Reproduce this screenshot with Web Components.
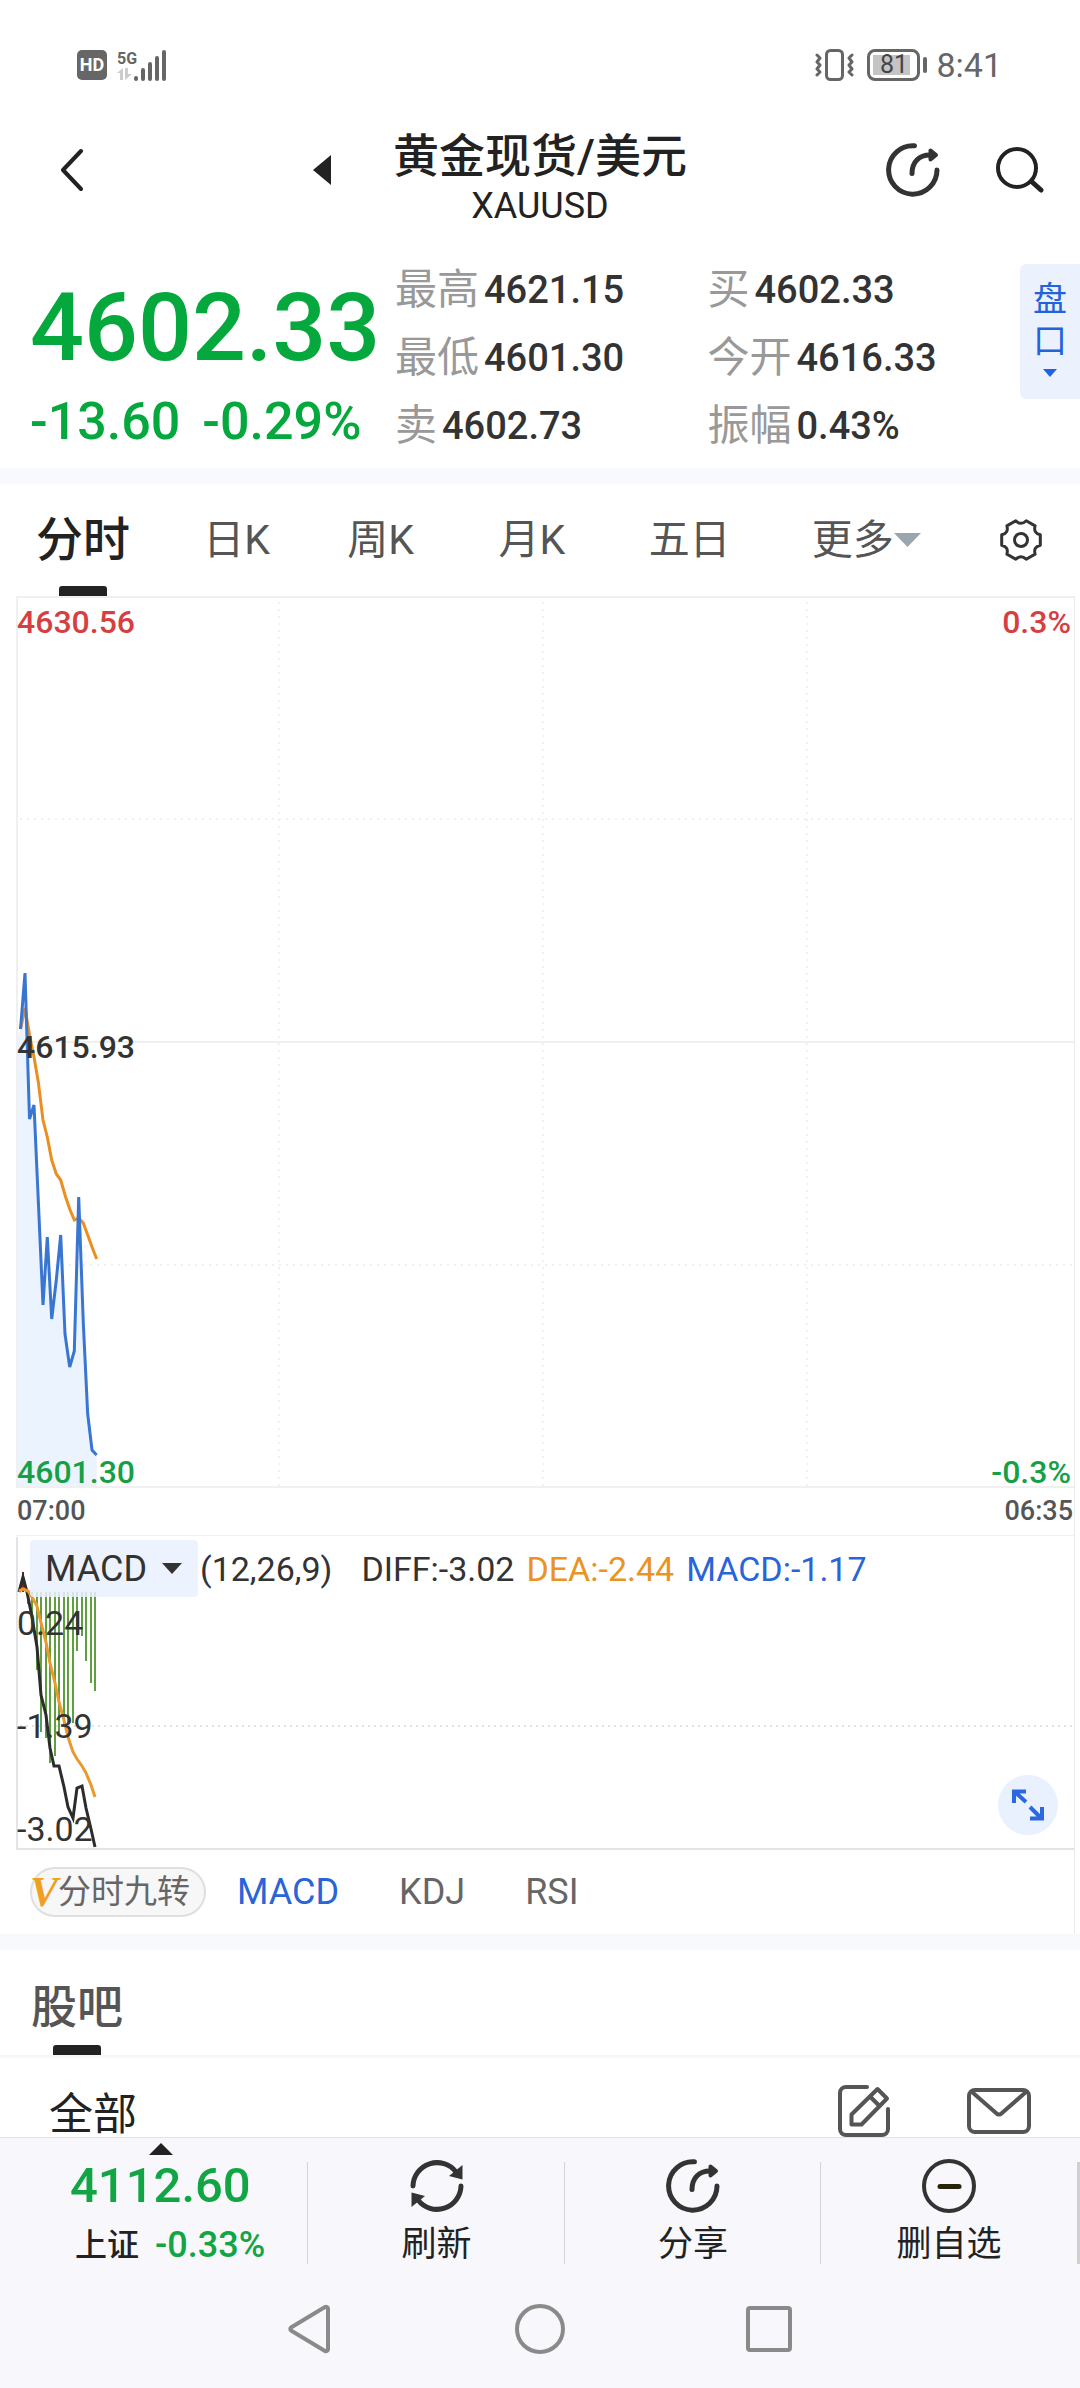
<!DOCTYPE html>
<html lang="zh-CN">
<head>
<meta charset="utf-8">
<meta name="viewport" content="width=device-width, initial-scale=1">
<title>黄金现货/美元 XAUUSD</title>
<style>
  body {
    margin: 0;
    min-height: 100vh;
    display: flex;
    flex-direction: column;
    background: #fff;
    color: #222;
    font-family: Roboto, "Noto Sans CJK SC", sans-serif;
  }
</style>
</head>
<body>
<status-bar></status-bar>
<page-header>黄金现货/美元<span slot="code">XAUUSD</span></page-header>
<quote-panel>
  <span slot="price">4602.33</span>
  <span slot="change">-13.60</span>
  <span slot="percent">-0.29%</span>
  <quote-stat label="最高">4621.15</quote-stat>
  <quote-stat label="买">4602.33</quote-stat>
  <quote-stat label="最低">4601.30</quote-stat>
  <quote-stat label="今开">4616.33</quote-stat>
  <quote-stat label="卖">4602.73</quote-stat>
  <quote-stat label="振幅">0.43%</quote-stat>
</quote-panel>
<section-band></section-band>
<period-tabs></period-tabs>
<chart-board>
  <price-chart></price-chart>
  <macd-chart></macd-chart>
  <indicator-row></indicator-row>
</chart-board>
<section-band></section-band>
<forum-section></forum-section>
<bottom-bar></bottom-bar>
<system-nav></system-nav>

<script>
// 共用基底：每個元件自帶 Shadow DOM 與樣式
class BaseElement extends HTMLElement {
  constructor() {
    super();
    this.attachShadow({ mode: 'open' });
  }

  connectedCallback() {
    this.shadowRoot.innerHTML = `
      <style>
        * { margin: 0; padding: 0; box-sizing: border-box; }
        :host { display: block; box-sizing: border-box; }
        button, select {
          border: none;
          background: none;
          color: inherit;
          font: inherit;
          cursor: pointer;
        }
        a { color: inherit; text-decoration: none; }
        svg { display: block; flex-shrink: 0; }
        ${this.styles}
      </style>
      ${this.markup}
    `;
  }

  get styles() { return ''; }
  get markup() { return ''; }
}

// 分享與工具列共用的圖示
const shareIcon = `
  <svg width="54" height="54" viewBox="0 0 54 54" fill="none" stroke="#333" stroke-width="5" stroke-linecap="round" aria-hidden="true">
    <path d="M28.500 2.800A24.200 24.200 0 1 0 51 27"/>
    <path d="M26 30.500C26 19 33 12 44 12"/>
    <path d="M44.500 7.500v9l5.500-4.500z" fill="#333" stroke-width="4" stroke-linejoin="round"/>
  </svg>`;

class StatusBar extends BaseElement {
  get styles() {
    return `
      :host {
        display: flex;
        justify-content: space-between;
        align-items: center;
        height: 112px;
        padding: 18px 78px 0 77px;
        color: #666;
      }
      .group { display: flex; align-items: center; }
      .hd {
        width: 30px;
        border-radius: 5px;
        background: #666;
        color: #fff;
        font-size: 18px;
        font-weight: 700;
        line-height: 30px;
        text-align: center;
      }
      .net { width: 17px; margin-left: 10px; font-size: 16px; font-weight: 700; line-height: 18px; }
      .battery {
        width: 53px;
        margin-left: 13px;
        border: 3px solid #666;
        border-radius: 8px;
        background: linear-gradient(#c4c4c4, #c4c4c4) 3px 3px / 37px 20px no-repeat;
        color: #444;
        font-size: 25px;
        line-height: 26px;
        text-align: center;
      }
      .cap { width: 4px; height: 16px; margin-left: 3px; border-radius: 2px; background: #666; }
      .time { margin-left: 9px; font-size: 34px; line-height: 40px; }
    `;
  }

  get markup() {
    return `
      <div class="group">
        <div class="hd">HD</div>
        <div class="net">5G
          <svg width="15" height="12" viewBox="0 0 15 12" fill="#ccc"><path d="M6 12H3V5H0L6 0zM8 0h3v6h4l-7 6z"/></svg>
        </div>
        <svg width="33" height="31" viewBox="0 0 33 31" stroke="#666" stroke-width="4" stroke-linecap="round">
          <path d="M2 28v1M9 20v9M16 14v15M23 8v21M30 2v27"/>
        </svg>
      </div>
      <div class="group">
        <svg width="39" height="32" viewBox="0 0 39 32" fill="none" stroke="#666" stroke-width="3" stroke-linecap="round" stroke-linejoin="round">
          <rect x="11.500" y="1.500" width="16" height="29" rx="4"/>
          <path d="M2 6l3 3-3 4 3 3-3 4 3 3-3 3M37 6l-3 3 3 4-3 3 3 4-3 3 3 3"/>
        </svg>
        <div class="battery">81</div>
        <div class="cap"></div>
        <div class="time">8:41</div>
      </div>
    `;
  }
}

class PageHeader extends BaseElement {
  get styles() {
    return `
      :host {
        display: grid;
        grid-template-columns: 1fr auto 1fr;
        align-items: center;
        color: #222;
      }
      .side { display: flex; align-items: center; justify-content: space-between; padding: 0 62px 0 60px; }
      .actions { display: flex; align-items: center; justify-content: flex-end; gap: 56px; padding-right: 36px; }
      .title { padding-top: 16px; text-align: center; }
      h1 { font-size: 46px; font-weight: 500; line-height: 56px; }
      p { font-size: 36px; line-height: 44px; }
    `;
  }

  get markup() {
    return `
      <div class="side">
        <button aria-label="返回">
          <svg width="23" height="44" viewBox="0 0 23 44" fill="none" stroke="#222" stroke-width="4" stroke-linecap="round" stroke-linejoin="round"><path d="M21 3L3 22l18 19"/></svg>
        </button>
        <button aria-label="上一个">
          <svg width="18" height="30" viewBox="0 0 18 30" fill="#222"><path d="M18 0v30L0 15z"/></svg>
        </button>
      </div>
      <div class="title">
        <h1><slot></slot></h1>
        <p><slot name="code"></slot></p>
      </div>
      <div class="actions">
        <button aria-label="分享">${shareIcon}</button>
        <button aria-label="搜索">
          <svg width="48" height="46" viewBox="0 0 48 46" fill="none" stroke="#222" stroke-width="4" stroke-linecap="round"><circle cx="21" cy="21" r="19"/><path stroke-width="5" d="M35.500 34.500l9.500 8.500"/></svg>
        </button>
      </div>
    `;
  }
}

class QuoteStat extends BaseElement {
  get styles() {
    return `
      :host { display: flex; gap: 5px; line-height: 68px; white-space: nowrap; }
      .label { color: #999; font-size: 42px; }
      .value { color: #333; font-size: 38px; font-weight: 500; }
    `;
  }

  get markup() {
    return `
      <span class="label">${this.getAttribute('label')}</span>
      <span class="value"><slot></slot></span>
    `;
  }
}

class QuotePanel extends BaseElement {
  get styles() {
    return `
      :host {
        display: grid;
        grid-template-columns: 365fr 625fr 60px;
        align-items: start;
        padding: 28px 0 8px 30px;
      }
      .main { padding-top: 24px; color: #05a83c; font-weight: 500; white-space: nowrap; }
      .price { font-size: 95px; line-height: 96px; }
      .change { display: flex; gap: 22px; margin-top: 16px; font-size: 52px; line-height: 60px; }
      .stats { display: grid; grid-template-columns: 1fr 1fr; }
      .book {
        display: flex;
        flex-direction: column;
        align-items: center;
        margin-top: 8px;
        padding: 14px 0 22px;
        border-radius: 6px 0 0 6px;
        background: #ebf2fe;
        color: #2262dd;
        font-size: 34px;
        line-height: 42px;
      }
      .book svg { margin-top: 7px; }
    `;
  }

  get markup() {
    return `
      <div class="main">
        <div class="price"><slot name="price"></slot></div>
        <div class="change"><slot name="change"></slot><slot name="percent"></slot></div>
      </div>
      <div class="stats"><slot></slot></div>
      <button class="book">
        <span>盘</span><span>口</span>
        <svg width="14" height="8" viewBox="0 0 14 8" fill="#2262e6"><path d="M0 0h14L7 8z"/></svg>
      </button>
    `;
  }
}

class SectionBand extends BaseElement {
  get styles() {
    return `:host { height: 16px; background: #f8f9fd; }`;
  }
}

class PeriodTabs extends BaseElement {
  get styles() {
    return `
      nav {
        display: grid;
        grid-template-columns: 167fr 144fr 151fr 150fr 163fr 188fr 43px;
        align-items: start;
        padding: 10px 37px 0 36px;
        color: #555;
        font-size: 41px;
        line-height: 92px;
      }
      button { display: flex; align-items: center; white-space: nowrap; }
      .active { flex-direction: column; justify-self: start; color: #222; font-size: 47px; font-weight: 500; }
      .active::after { content: ''; width: 48px; height: 10px; border-radius: 3px 3px 0 0; background: #222; }
      .settings { height: 92px; }
    `;
  }

  get markup() {
    return `
      <nav aria-label="周期">
        <button class="active">分时</button>
        <button>日K</button>
        <button>周K</button>
        <button>月K</button>
        <button>五日</button>
        <button>更多<svg width="27" height="14" viewBox="0 0 27 14" fill="#9aa5b0"><path d="M0 0h27L13.500 14z"/></svg></button>
        <button class="settings" aria-label="设置">
          <svg width="42" height="42" viewBox="0 0 42 42" fill="none" stroke="#333" stroke-width="3" stroke-linejoin="round">
            <path d="M40.300 26.200Q33.100 28 35.100 35.100L26.200 40.300Q21 35 15.800 40.300L6.900 35.100Q8.900 28 1.700 26.200V15.800Q8.900 14 6.900 6.900L15.800 1.700Q21 7 26.200 1.700L35.100 6.900Q33.100 14 40.300 15.800Z"/>
            <circle cx="21" cy="21" r="6.500"/>
          </svg>
        </button>
      </nav>
    `;
  }
}

class ChartBoard extends BaseElement {
  get styles() {
    return `:host { margin-right: 5px; padding-left: 16px; border-right: 1px solid #ebebeb; }`;
  }

  get markup() {
    return `<slot></slot>`;
  }
}

class PriceChart extends BaseElement {
  get styles() {
    return `
      .plot { position: relative; }
      .plot svg { width: 100%; }
      .axis {
        position: absolute;
        top: 6px;
        bottom: -4px;
        display: flex;
        flex-direction: column;
        justify-content: space-between;
        color: #333;
        font-size: 32px;
        font-weight: 500;
        line-height: 40px;
      }
      .left { left: 1px; }
      .right { right: 3px; text-align: right; }
      .up { color: #d63f3f; }
      .down { color: #169f45; }
      .times {
        display: flex;
        justify-content: space-between;
        padding: 0 1px;
        color: #555;
        font-size: 27px;
        font-weight: 500;
        line-height: 47px;
      }
    `;
  }

  get markup() {
    return `
      <div class="plot">
        <svg viewBox="16 596 1058 892" fill="none">
          <g stroke="#f0f0f1" stroke-width="2">
            <path d="M16 597H1074M16 1042H1074M16 1487H1074M17 597V1487"/>
            <path d="M279 602V1487M543 602V1487M807 602V1487M20 819H1074M20 1265H1074" stroke-dasharray="2 5"/>
          </g>
          <path fill="#ebf3fe" d="M18 1035L20.500 1029L25 973L29.500 1119L34 1105L43 1305L47.300 1237L51.700 1319L60.700 1235L65 1334L69.700 1367L74.300 1351L78.700 1197L83.300 1323L87.700 1414L92 1450L96.700 1455V1486H18Z"/>
          <path stroke="#ea8f22" stroke-width="3" d="M20.500 1029L25 1008L29.700 1036L34 1057L38.300 1082L43 1120L47.300 1137L51.700 1160L56.300 1174L60.700 1180L65.300 1196L69.700 1209L74.300 1220L78.700 1218L83.300 1223L87.700 1235L92 1247L96.700 1259"/>
          <path stroke="#3976d2" stroke-width="3" d="M20.500 1029L25 973L29.500 1119L34 1105L43 1305L47.300 1237L51.700 1319L56.300 1280L60.700 1235L65 1334L69.700 1367L74.300 1351L78.700 1197L83.300 1323L87.700 1414L92 1450L96.700 1455"/>
        </svg>
        <div class="axis left"><span class="up">4630.56</span><span>4615.93</span><span class="down">4601.30</span></div>
        <div class="axis right"><span class="up">0.3%</span><span class="down">-0.3%</span></div>
      </div>
      <div class="times"><span>07:00</span><span>06:35</span></div>
    `;
  }
}

class MacdChart extends BaseElement {
  // [x, 底部 y]，柱子都從零軸 1592 往下畫
  get bars() {
    return [
      [28, 1604], [32, 1617], [37, 1670], [41, 1732], [46, 1738], [50, 1763],
      [55, 1756], [59, 1733], [64, 1727], [68, 1724], [73, 1723], [77, 1651],
      [82, 1636], [86, 1661], [91, 1683], [95, 1691]
    ];
  }

  get styles() {
    return `
      :host { position: relative; color: #333; }
      .plot { width: 100%; }
      .axis {
        position: absolute;
        top: 68px;
        bottom: 1px;
        left: 1px;
        display: flex;
        flex-direction: column;
        justify-content: space-between;
        font-size: 34px;
        line-height: 40px;
      }
      .legend {
        position: absolute;
        top: 5px;
        left: 14px;
        display: flex;
        align-items: center;
        font-size: 34px;
        line-height: 56px;
        white-space: nowrap;
      }
      .picker { display: flex; align-items: center; border-radius: 4px; background: rgba(234, 241, 254, 0.85); }
      select { appearance: none; width: 168px; height: 57px; padding-left: 15px; font-size: 36px; }
      .picker svg { margin-left: -36px; margin-right: 16px; pointer-events: none; }
      .params { margin: 0 29px 0 2px; }
      .values { display: flex; gap: 12px; }
      .dea { color: #ea9322; }
      .macd { color: #2964d8; }
      .expand {
        position: absolute;
        right: 16px;
        bottom: 15px;
        display: grid;
        place-items: center;
        width: 60px;
        height: 60px;
        border-radius: 50%;
        background: #e9f1fe;
      }
    `;
  }

  get markup() {
    const bars = this.bars.map(([x, y]) => `M${x} 1592V${y}`).join('');
    return `
      <svg class="plot" viewBox="16 1535 1058 315" fill="none">
        <path stroke="#f0f0f1" d="M16 1535.500H1074"/>
        <path stroke="#e4e4e4" stroke-width="2" d="M17 1537V1849H1074"/>
        <path stroke="#e2e2e2" stroke-width="2" stroke-dasharray="2 4" d="M20 1726H1074"/>
        <path stroke="#5f9f3f" stroke-width="2" d="${bars}"/>
        <path stroke="#a01818" stroke-width="2" d="M23 1572V1592"/>
        <path stroke="#2c2c2c" stroke-width="3" d="M19 1592L23 1577L27 1592L32 1617L37 1647L41 1695L46 1715L50 1748L54 1766H59L64 1787L68 1807L73 1818L77 1788L82 1786L86 1808L91 1829L95 1847"/>
        <path stroke="#ea9a2c" stroke-width="3" d="M19 1591L23 1589L28 1591L32 1597L37 1606L41 1623L46 1642L50 1663L55 1683L59 1702L64 1720L68 1737L73 1752L77 1759L82 1766L86 1773L91 1785L95 1797"/>
      </svg>
      <div class="axis"><span>0.24</span><span>-1.39</span><span>-3.02</span></div>
      <div class="legend">
        <label class="picker">
          <select aria-label="指标"><option>MACD</option><option>KDJ</option><option>RSI</option></select>
          <svg width="20" height="11" viewBox="0 0 20 11" fill="#333"><path d="M0 0h20L10 11z"/></svg>
        </label>
        <span class="params">(12,26,9)</span>
        <span class="values"><span>DIFF:-3.02</span><span class="dea">DEA:-2.44</span><span class="macd">MACD:-1.17</span></span>
      </div>
      <button class="expand" aria-label="全屏">
        <svg width="32" height="32" viewBox="0 0 32 32" fill="none" stroke="#2c68e2" stroke-width="4"><path d="M2 14V2.500H14M3 3l11 10M30 18V29.500H18M29 29L18 18"/></svg>
      </button>
    `;
  }
}

class IndicatorRow extends BaseElement {
  get styles() {
    return `
      :host {
        display: flex;
        align-items: center;
        gap: 60px;
        height: 84px;
        padding-left: 14px;
        color: #666;
        font-size: 36px;
      }
      .pill {
        display: flex;
        align-items: center;
        height: 50px;
        margin-right: -29px;
        padding-right: 14px;
        border: 2px solid #dfdfdf;
        border-radius: 25px;
        background: #f7f7f7;
        font-size: 33px;
        line-height: 46px;
      }
      .mark {
        margin-left: -2px;
        color: #f0a020;
        font-family: "Liberation Serif", serif;
        font-size: 42px;
        font-style: italic;
        font-weight: 700;
      }
      .active { color: #2964d8; }
    `;
  }

  get markup() {
    return `
      <button class="pill"><span class="mark">V</span>分时九转</button>
      <button class="active">MACD</button>
      <button>KDJ</button>
      <button>RSI</button>
    `;
  }
}

class ForumSection extends BaseElement {
  get styles() {
    return `
      .head { padding: 19px 31px 0; border-bottom: 3px solid #f6f7fc; }
      h2 {
        display: inline-flex;
        flex-direction: column;
        align-items: center;
        vertical-align: top;
        color: #555;
        font-size: 46px;
        font-weight: 500;
        line-height: 76px;
      }
      h2::after { content: ''; width: 48px; height: 10px; border-radius: 3px 3px 0 0; background: #222; }
      .row { display: flex; align-items: center; padding: 27px 49px 0; }
      .all { margin-right: auto; padding-top: 8px; font-size: 44px; line-height: 44px; }
      .mail { margin-left: 77px; }
    `;
  }

  get markup() {
    return `
      <div class="head"><h2>股吧</h2></div>
      <div class="row">
        <button class="all">全部</button>
        <button aria-label="发帖">
          <svg width="52" height="52" viewBox="0 0 52 52" fill="none" stroke="#555" stroke-width="4" stroke-linecap="round" stroke-linejoin="round">
            <path d="M29 2H8a6 6 0 0 0-6 6v36a6 6 0 0 0 6 6h36a6 6 0 0 0 6-6V24"/>
            <path d="M39.500 4L49 13.500L23.500 39.500H13.500V29.500ZM32 11.500l9.500 9.500"/>
          </svg>
        </button>
        <button class="mail" aria-label="消息">
          <svg width="64" height="46" viewBox="0 0 64 46" fill="none" stroke="#555" stroke-width="4" stroke-linecap="round"><rect x="2" y="2" width="60" height="42" rx="6"/><path d="M5 4L29 25q3 3 6 0L59 4"/></svg>
        </button>
      </div>
    `;
  }
}

class BottomBar extends BaseElement {
  get styles() {
    return `
      :host {
        display: grid;
        grid-template-columns: 308fr 257fr 256fr 259fr;
        margin-top: auto;
        padding-top: 21px;
        border-top: 1px solid #e2e2e6;
        background: #f8f8fc;
      }
      .cell {
        position: relative;
        display: flex;
        flex-direction: column;
        align-items: center;
        gap: 10px;
        font-size: 35px;
        line-height: 44px;
      }
      .cell::after {
        content: '';
        position: absolute;
        top: 3px;
        bottom: 3px;
        right: 0;
        width: 1px;
        background: #d4d4d8;
      }
      .cell:last-child { padding-right: 3px; }
      .cell:last-child::after { width: 3px; background: #d0d0d0; }
      .index { align-items: flex-start; padding-left: 70px; color: #12a544; font-weight: 500; }
      .arrow { position: absolute; top: -16px; left: 149px; }
      .price { font-size: 49px; line-height: 54px; }
      .line { display: flex; gap: 16px; padding-left: 5px; font-size: 36px; }
      .name { color: #222; font-size: 32px; }
    `;
  }

  get markup() {
    return `
      <a class="cell index" href="#index">
        <svg class="arrow" width="24" height="12" viewBox="0 0 24 12" fill="#222"><path d="M12 0l12 12H0z"/></svg>
        <span class="price">4112.60</span>
        <span class="line"><span class="name">上证</span><span>-0.33%</span></span>
      </a>
      <button class="cell">
        <svg width="54" height="54" viewBox="0 0 54 54" fill="none" stroke="#333" stroke-width="5" stroke-linecap="round">
          <path d="M3 27A24 24 0 0 1 46 13"/><path d="M52.500 6v14.500L39 17z" fill="#333" stroke="none"/>
          <path d="M51 27A24 24 0 0 1 8 41"/><path d="M1.500 48V33.500L15 37z" fill="#333" stroke="none"/>
        </svg>
        刷新
      </button>
      <button class="cell">${shareIcon}分享</button>
      <button class="cell">
        <svg width="54" height="54" viewBox="0 0 54 54" fill="none" stroke="#333" stroke-width="4" stroke-linecap="round"><circle cx="27" cy="27" r="25"/><path stroke="#28240a" stroke-width="5" d="M18 27.500h19"/></svg>
        删自选
      </button>
    `;
  }
}

class SystemNav extends BaseElement {
  get styles() {
    return `
      :host {
        display: flex;
        justify-content: center;
        gap: 181px;
        padding: 37px 0 34px;
        background: #f8f8fc;
      }
    `;
  }

  get markup() {
    const attrs = 'width="50" height="50" viewBox="0 0 50 50" fill="none" stroke="#8a8a8a" stroke-width="4" stroke-linejoin="round"';
    return `
      <button aria-label="返回"><svg ${attrs}><path d="M44 4.500a2 2 0 0 0-3-1.500L7 23.500a2 2 0 0 0 0 3L41 47a2 2 0 0 0 3-1.500z"/></svg></button>
      <button aria-label="主页"><svg ${attrs}><circle cx="25" cy="25" r="23"/></svg></button>
      <button aria-label="最近任务"><svg ${attrs}><rect x="2" y="4" width="42" height="42" rx="2"/></svg></button>
    `;
  }
}

// 註冊自訂元素
customElements.define('status-bar', StatusBar);
customElements.define('page-header', PageHeader);
customElements.define('quote-stat', QuoteStat);
customElements.define('quote-panel', QuotePanel);
customElements.define('section-band', SectionBand);
customElements.define('period-tabs', PeriodTabs);
customElements.define('chart-board', ChartBoard);
customElements.define('price-chart', PriceChart);
customElements.define('macd-chart', MacdChart);
customElements.define('indicator-row', IndicatorRow);
customElements.define('forum-section', ForumSection);
customElements.define('bottom-bar', BottomBar);
customElements.define('system-nav', SystemNav);
</script>
</body>
</html>
